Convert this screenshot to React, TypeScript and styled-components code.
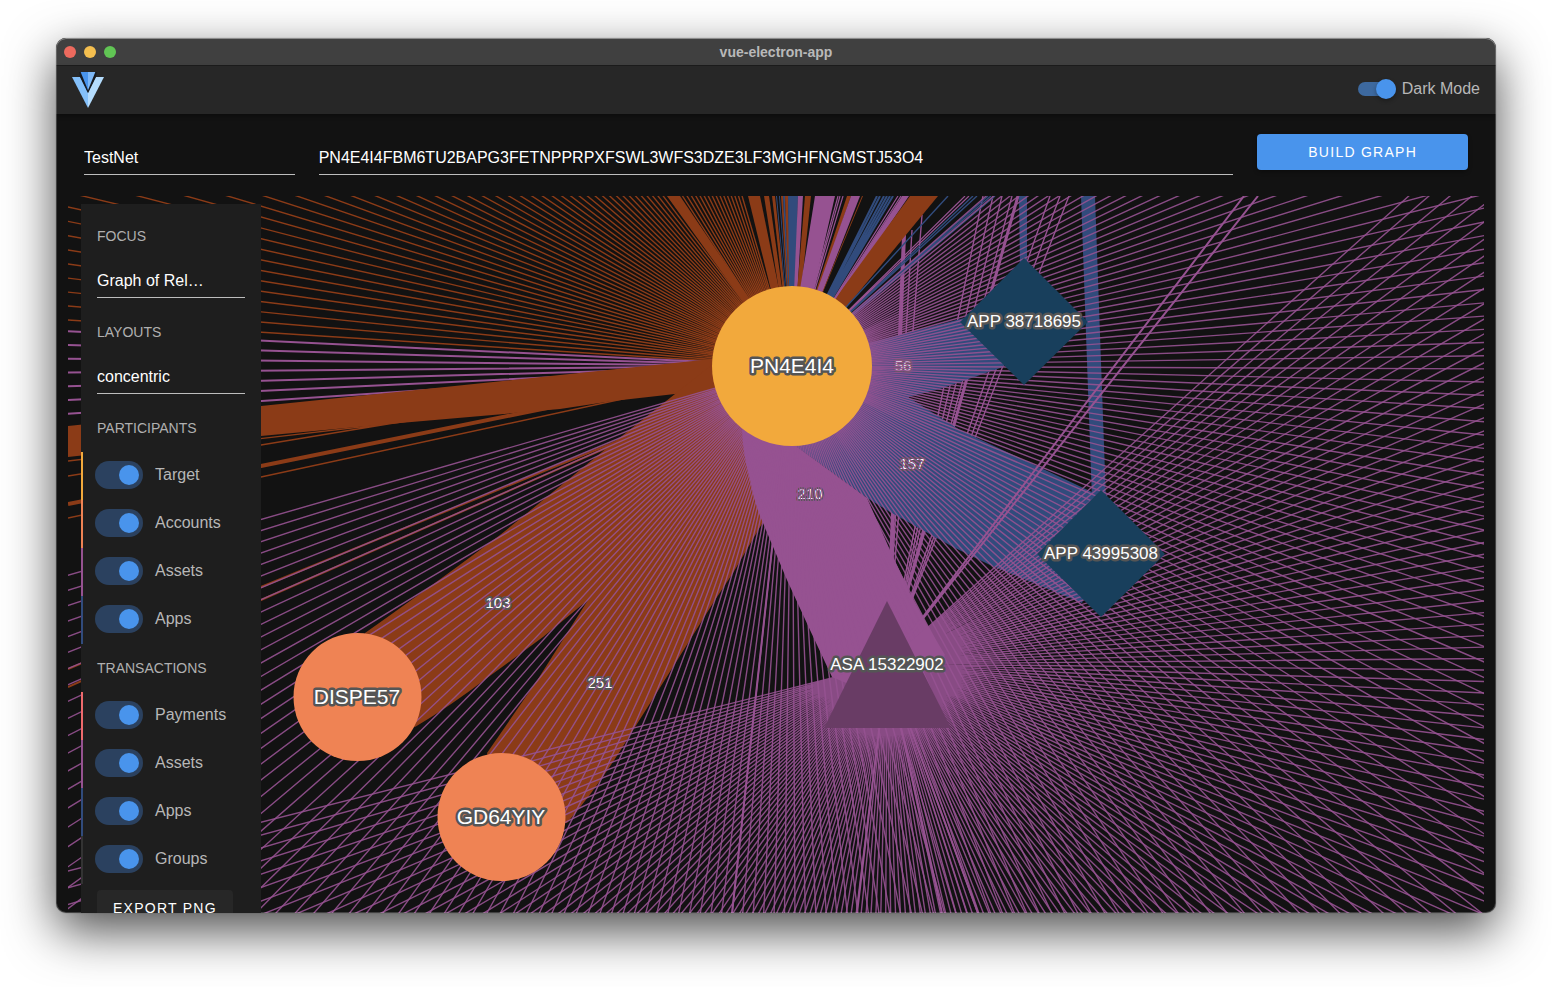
import React, { useState } from "react";
import styled, { createGlobalStyle } from "styled-components";

const GlobalStyle = createGlobalStyle`
  * { box-sizing: border-box; }
  body {
    margin: 0;
    background: #ffffff;
    font-family: "Liberation Sans", Arial, Helvetica, sans-serif;
    font-size: 16px;
    color: #ffffff;
  }
  button, input, select { font-family: inherit; }
`;

const Desktop = styled.div`
  height: 100vh;
  padding: 38px 56px 74px;
  display: flex;
  overflow: hidden;
`;

const AppWindow = styled.div`
  position: relative;
  flex: 1;
  min-width: 0;
  display: flex;
  flex-direction: column;
  overflow: hidden;
  border-radius: 10px;
  background: #121212;
  &::after {
    content: "";
    position: absolute;
    inset: 0;
    border-radius: 10px;
    box-shadow: inset 0 0 0 1px rgba(255, 255, 255, 0.2), inset 0 1px 0 rgba(255, 255, 255, 0.25);
    pointer-events: none;
  }
`;

const WindowShadow = styled.div`
  flex: 1;
  min-width: 0;
  display: flex;
  border-radius: 10px;
  box-shadow: 0 0 1px rgba(0, 0, 0, 0.5), 0 18px 50px rgba(0, 0, 0, 0.7);
`;

const TitleBar = styled.header`
  flex: none;
  height: 28px;
  display: grid;
  grid-template-columns: 1fr auto 1fr;
  align-items: center;
  padding: 0 8px;
  background: #404040;
  border-bottom: 1px solid #1c1c1c;
`;

const Lights = styled.div`
  display: flex;
  gap: 8px;
`;

const Light = styled.button<{ $color: string }>`
  width: 12px;
  height: 12px;
  padding: 0;
  border: 0;
  border-radius: 50%;
  background: ${(p) => p.$color};
`;

const WindowTitle = styled.h1`
  margin: 0;
  font-size: 14px;
  line-height: 16px;
  color: #b9b9b9;
`;

const AppBar = styled.div`
  flex: none;
  height: 48px;
  display: flex;
  align-items: center;
  justify-content: space-between;
  padding: 0 16px;
  background: #272727;
  box-shadow: 0 2px 4px rgba(0, 0, 0, 0.3);
`;

const ThemeToggle = styled.div`
  display: flex;
  align-items: center;
  gap: 6px;
  padding-bottom: 2px;
`;

const SwitchLabel = styled.label`
  line-height: 20px;
  color: #b7b7b7;
`;

const SlimTrack = styled.span`
  display: flex;
  align-items: center;
  height: 14px;
  border-radius: 7px;
  background: #3d699f;
`;

const SlimSwitch = styled.input`
  appearance: none;
  margin: 0;
  width: 38px;
  height: 20px;
  display: flex;
  justify-content: ${(p) => (p.checked ? "flex-end" : "flex-start")};
  &::before {
    content: "";
    width: 20px;
    height: 20px;
    border-radius: 50%;
    background: #4994ec;
    box-shadow: 0 2px 4px rgba(0, 0, 0, 0.3);
  }
`;

const Controls = styled.form`
  flex: none;
  display: grid;
  grid-template-columns: 2fr 8fr 2fr;
  padding: 20px 16px 21px;
`;

const Field = styled.div`
  min-width: 0;
  padding: 0 12px;
`;

const LineSelect = styled.select`
  appearance: none;
  display: block;
  width: 100%;
  height: 41px;
  padding: 6px 0 0;
  border: 0;
  border-bottom: 1px solid #bdbdbd;
  border-radius: 0;
  background: transparent;
  font-size: 16px;
  color: #ffffff;
`;

const LineInput = styled.input`
  display: block;
  width: 100%;
  height: 41px;
  padding: 8px 0 0;
  border: 0;
  border-bottom: 1px solid #bdbdbd;
  background: transparent;
  font-size: 16px;
  color: #ffffff;
`;

const PrimaryButton = styled.button`
  width: 100%;
  height: 36px;
  border: 0;
  border-radius: 4px;
  background: #4994ec;
  font-size: 14px;
  letter-spacing: 0.09em;
  color: #ffffff;
  box-shadow: 0 2px 4px rgba(0, 0, 0, 0.3);
`;

const GraphArea = styled.main`
  flex: 1;
  min-height: 0;
  margin: 0 12px;
  display: grid;
  grid-template: minmax(0, 1fr) / minmax(0, 1fr);
  overflow: hidden;
`;

const GraphCanvas = styled.svg`
  grid-area: 1 / 1;
  width: 100%;
  height: 100%;
`;

const Sidebar = styled.aside`
  grid-area: 1 / 1;
  z-index: 1;
  align-self: start;
  width: 180px;
  margin: 8px 0 0 13px;
  padding: 8px 0;
  background: #1e1e1e;
`;

const Subheader = styled.h2`
  margin: 0;
  padding: 0 16px;
  font-size: 14px;
  line-height: 48px;
  font-weight: 400;
  color: #b0b0b0;
`;

const SideField = styled.div`
  height: 48px;
  padding: 0 16px;
`;

const SideSelect = styled(LineSelect)`
  height: 38px;
  padding: 4px 32px 0 0;
`;

const ToggleRow = styled.div<{ $accent: string }>`
  height: 48px;
  display: flex;
  align-items: center;
  gap: 12px;
  padding: 0 0 2px 12px;
  border-left: 2px solid ${(p) => p.$accent};
`;

const InsetSwitch = styled.input`
  appearance: none;
  margin: 0;
  width: 48px;
  height: 28px;
  padding: 4px;
  display: flex;
  justify-content: ${(p) => (p.checked ? "flex-end" : "flex-start")};
  border-radius: 14px;
  background: #2b415f;
  &::before {
    content: "";
    width: 20px;
    height: 20px;
    border-radius: 50%;
    background: #4994ec;
  }
`;

const SecondaryButton = styled.button`
  height: 36px;
  margin: 6px 16px 0;
  padding: 0 16px;
  border: 0;
  border-radius: 4px;
  background: #272727;
  font-size: 14px;
  letter-spacing: 0.09em;
  color: #ffffff;
`;

const NodeLabel = styled.text<{ $size: number }>`
  font-size: ${(p) => p.$size}px;
  fill: #ffffff;
  stroke: #555555;
  stroke-width: 5px;
  stroke-linejoin: round;
  paint-order: stroke;
  text-anchor: middle;
`;

const EdgeLabel = styled(NodeLabel)`
  stroke-width: 4px;
`;

/* ---------- graph data ---------- */

const BROWN = "#8b3b17";
const PURPLE = "#965291";
const BLUE = "#314b7c";

const HUB = { x: 792, y: 366 };
const ASA = { x: 887, y: 664 };
const RING = 9250;
const STEP = 1.0909;

const rad = (deg: number) => (deg * Math.PI) / 180;
const ringPoint = (deg: number) =>
  `${(HUB.x + RING * Math.cos(rad(deg))).toFixed(1)} ${(HUB.y + RING * Math.sin(rad(deg))).toFixed(1)}`;

const fan = (from: { x: number; y: number }, start: number, count: number, step = STEP) =>
  Array.from({ length: count }, (_, i) => `M${from.x} ${from.y}L${ringPoint(start + i * step)}`).join("");

const toTop = (from: { x: number; y: number }, xs: number[]) =>
  xs.map((x) => `M${from.x} ${from.y}L${x} 196`).join("");

const hubPurpleFan = fan(HUB, 0.24 - 38 * STEP, 189);
const asaFan = fan(ASA, 0.24 - 37 * STEP, 188);
const hubBrownFan = fan(HUB, 183.64, 65, 1.0935);
const westPurple = fan(HUB, 176.23, 7, 1.087);

/* bundles that leave the hub through the top edge: [left, right, colour] */
const topBundles: [number, number, string][] = [
  [667, 680, BROWN],
  [748, 760, BROWN],
  [764, 769, BROWN],
  [772, 775, BROWN],
  [776, 777, BLUE],
  [779, 780, BLUE],
  [781, 783, BROWN],
  [783, 785, BLUE],
  [785, 788, BROWN],
  [788, 798, BLUE],
  [798, 803, PURPLE],
  [805, 811, BROWN],
  [815, 835, PURPLE],
  [847, 851, BROWN],
  [851, 860, PURPLE],
  [862, 863, BROWN],
  [902, 909, PURPLE],
  [910, 938, BROWN],
];

const bundlePoints = (l: number, r: number) => {
  const c = (l + r) / 2;
  const hx = HUB.x + (c - HUB.x) * 0.3;
  const half = ((r - l) / 2) * 0.6;
  return `${l},196 ${r},196 ${hx + half},315 ${hx - half},315`;
};

const Graph = () => (
  <GraphCanvas viewBox="68 196 1416 717" preserveAspectRatio="xMidYMin slice" role="img" aria-label="Relations graph">
    <g fill="none" stroke={BROWN}>
      <path d={hubBrownFan} strokeWidth="1.4" />
      <path d="M68 461L395 423L600 392M68 476L261 445L400 422M68 518L261 477L627 398L720 378" strokeWidth="1.4" />
      <path d="M68 504L261 466L557 406L720 374" strokeWidth="4" />
      <path d="M68 669L261 587L620 440L740 391M68 687L261 600L613 445L740 391" strokeWidth="2" />
    </g>
    <path d={westPurple} stroke={PURPLE} strokeWidth="2" />
    <path d="M68 426L261 406L560 375L712 359L760 366L725 388L675 394L613 401L560 409L400 423L261 436L68 457Z" fill={BROWN} />
    <path
      d="M760 340L718 360L675 394L613 443Q558 488 500 535Q440 580 365 633L357 697L415 727Q452 705 487 678L543 637L588 600L538 679L487 753L501 817L567 823Q600 785 630 735L673 667L715 600L733 573L763 522L800 430Z"
      fill={BROWN}
    />
    <g fill="none" stroke={PURPLE}>
      <path d="M887 664L912 230M887 664L922 215" strokeWidth="1.4" />
      <path d="M887 664L904 235" strokeWidth="4" />
      <path d={toTop(ASA, [983, 993, 1002, 1012, 1050, 1060, 1069])} strokeWidth="1.4" />
      <path d={toTop(ASA, [1018])} strokeWidth="3" />
    </g>
    <g fill={BLUE}>
      <path d="M1081 196H1095L1106 500H1092Z" />
      <path d="M1019 196H1027V270H1020Z" />
      <path d="M860 345L872 342L968 317L1024 322L1003 367L940 389L908 397L960 430L1092 492L1101 554L1082 603L990 565L953 547L890 512L867 498L797 447L792 366Z" />
    </g>
    {topBundles.map(([l, r, color]) => (
      <polygon key={l} points={bundlePoints(l, r)} fill={color} />
    ))}
    <path d={toTop(HUB, [877, 880, 884, 887, 890, 893])} stroke={BLUE} strokeWidth="2" />
    <path d={toTop(HUB, [948, 973, 977, 988, 991, 995])} stroke={BLUE} strokeWidth="1.4" />
    <path d={toTop(HUB, [838, 840, 843, 898, 901, 965, 969])} stroke={PURPLE} strokeWidth="1.2" />
    <path
      d="M742 430Q743 455 750 480Q754 503 763 523L787 580L810 630L832 677L887 700L945 655L930 630L910 593L890 550L867 498L797 447L792 366Z"
      fill={PURPLE}
    />
    <EdgeLabel $size={15} x="903" y="371">56</EdgeLabel>
    <EdgeLabel $size={15} x="912" y="469">157</EdgeLabel>
    <EdgeLabel $size={15} x="810" y="499">210</EdgeLabel>
    <EdgeLabel $size={15} x="498" y="608">103</EdgeLabel>
    <EdgeLabel $size={15} x="600" y="688">251</EdgeLabel>
    <g fill="none" stroke={PURPLE}>
      <path d={hubPurpleFan} strokeWidth="1.4" strokeOpacity="0.9" />
      <path d={asaFan} strokeWidth="1.4" strokeOpacity="0.9" />
      <path d={toTop(ASA, [1244, 1258])} strokeWidth="2" />
      <path d="M792 366L732 913M887 664L857 913M887 664L978 913M887 664L942 913" strokeWidth="2" />
    </g>
    <circle cx="792" cy="366" r="80" fill="#f2a93c" />
    <circle cx="357.5" cy="697" r="64" fill="#ef8354" />
    <circle cx="501.5" cy="817" r="64" fill="#ef8354" />
    <path d="M1024 258L1088 322L1024 385L960 322Z" fill="#183f5c" />
    <path d="M1101 490L1165 554L1101 617L1037 554Z" fill="#183f5c" />
    <path d="M887 601L951 728H824Z" fill="#693c65" />
    <NodeLabel $size={21} x="792" y="373">PN4E4I4</NodeLabel>
    <NodeLabel $size={21} x="357" y="704">DISPE57</NodeLabel>
    <NodeLabel $size={21} x="501" y="824">GD64YIY</NodeLabel>
    <NodeLabel $size={17} x="1024" y="327">APP 38718695</NodeLabel>
    <NodeLabel $size={17} x="1101" y="559">APP 43995308</NodeLabel>
    <NodeLabel $size={17} x="887" y="670">ASA 15322902</NodeLabel>
  </GraphCanvas>
);

const Logo = () => (
  <svg width="32" height="36" viewBox="0 0 96 108" aria-hidden="true">
    <path d="M0 15H25L48 61V108Z" fill="#84c0fa" />
    <path d="M96 15H71L48 61V108Z" fill="#b4dcfd" />
    <path d="M22 0H74L72 15L48 64L24 15Z" fill="#161a20" />
    <path d="M26 0H48V55Z" fill="#4994ec" />
    <path d="M70 0H48V55Z" fill="#7db8f7" />
  </svg>
);

const participants = [
  { id: "p-target", name: "Target", accent: "#f2a93c" },
  { id: "p-accounts", name: "Accounts", accent: "#ef8354" },
  { id: "p-assets", name: "Assets", accent: PURPLE },
  { id: "p-apps", name: "Apps", accent: BLUE },
];

const transactions = [
  { id: "t-payments", name: "Payments", accent: "#ee6a6c" },
  { id: "t-assets", name: "Assets", accent: PURPLE },
  { id: "t-apps", name: "Apps", accent: BLUE },
  { id: "t-groups", name: "Groups", accent: "#333333" },
];

const Toggle = ({ id, name, accent }: { id: string; name: string; accent: string }) => {
  const [on, setOn] = useState(true);
  return (
    <ToggleRow $accent={accent}>
      <InsetSwitch id={id} type="checkbox" role="switch" checked={on} onChange={() => setOn(!on)} />
      <SwitchLabel htmlFor={id}>{name}</SwitchLabel>
    </ToggleRow>
  );
};

export default function App() {
  const [dark, setDark] = useState(true);
  return (
    <>
      <GlobalStyle />
      <Desktop>
        <WindowShadow>
          <AppWindow>
            <TitleBar>
              <Lights>
                <Light type="button" aria-label="Close" $color="#ed6a5e" />
                <Light type="button" aria-label="Minimize" $color="#f5bf4f" />
                <Light type="button" aria-label="Zoom" $color="#61c554" />
              </Lights>
              <WindowTitle>vue-electron-app</WindowTitle>
            </TitleBar>
            <AppBar>
              <Logo />
              <ThemeToggle>
                <SlimTrack>
                  <SlimSwitch id="dark-mode" type="checkbox" role="switch" checked={dark} onChange={() => setDark(!dark)} />
                </SlimTrack>
                <SwitchLabel htmlFor="dark-mode">Dark Mode</SwitchLabel>
              </ThemeToggle>
            </AppBar>
            <Controls onSubmit={(e) => e.preventDefault()}>
              <Field>
                <LineSelect aria-label="Network">
                  <option>TestNet</option>
                </LineSelect>
              </Field>
              <Field>
                <LineInput
                  aria-label="Address"
                  defaultValue="PN4E4I4FBM6TU2BAPG3FETNPPRPXFSWL3WFS3DZE3LF3MGHFNGMSTJ53O4"
                />
              </Field>
              <Field>
                <PrimaryButton type="submit">BUILD GRAPH</PrimaryButton>
              </Field>
            </Controls>
            <GraphArea>
              <Graph />
              <Sidebar>
                <Subheader>FOCUS</Subheader>
                <SideField>
                  <SideSelect aria-label="Focus">
                    <option>Graph of Rel…</option>
                  </SideSelect>
                </SideField>
                <Subheader>LAYOUTS</Subheader>
                <SideField>
                  <SideSelect aria-label="Layout">
                    <option>concentric</option>
                  </SideSelect>
                </SideField>
                <Subheader>PARTICIPANTS</Subheader>
                {participants.map((t) => (
                  <Toggle key={t.id} {...t} />
                ))}
                <Subheader>TRANSACTIONS</Subheader>
                {transactions.map((t) => (
                  <Toggle key={t.id} {...t} />
                ))}
                <SecondaryButton type="button">EXPORT PNG</SecondaryButton>
              </Sidebar>
            </GraphArea>
          </AppWindow>
        </WindowShadow>
      </Desktop>
    </>
  );
}
